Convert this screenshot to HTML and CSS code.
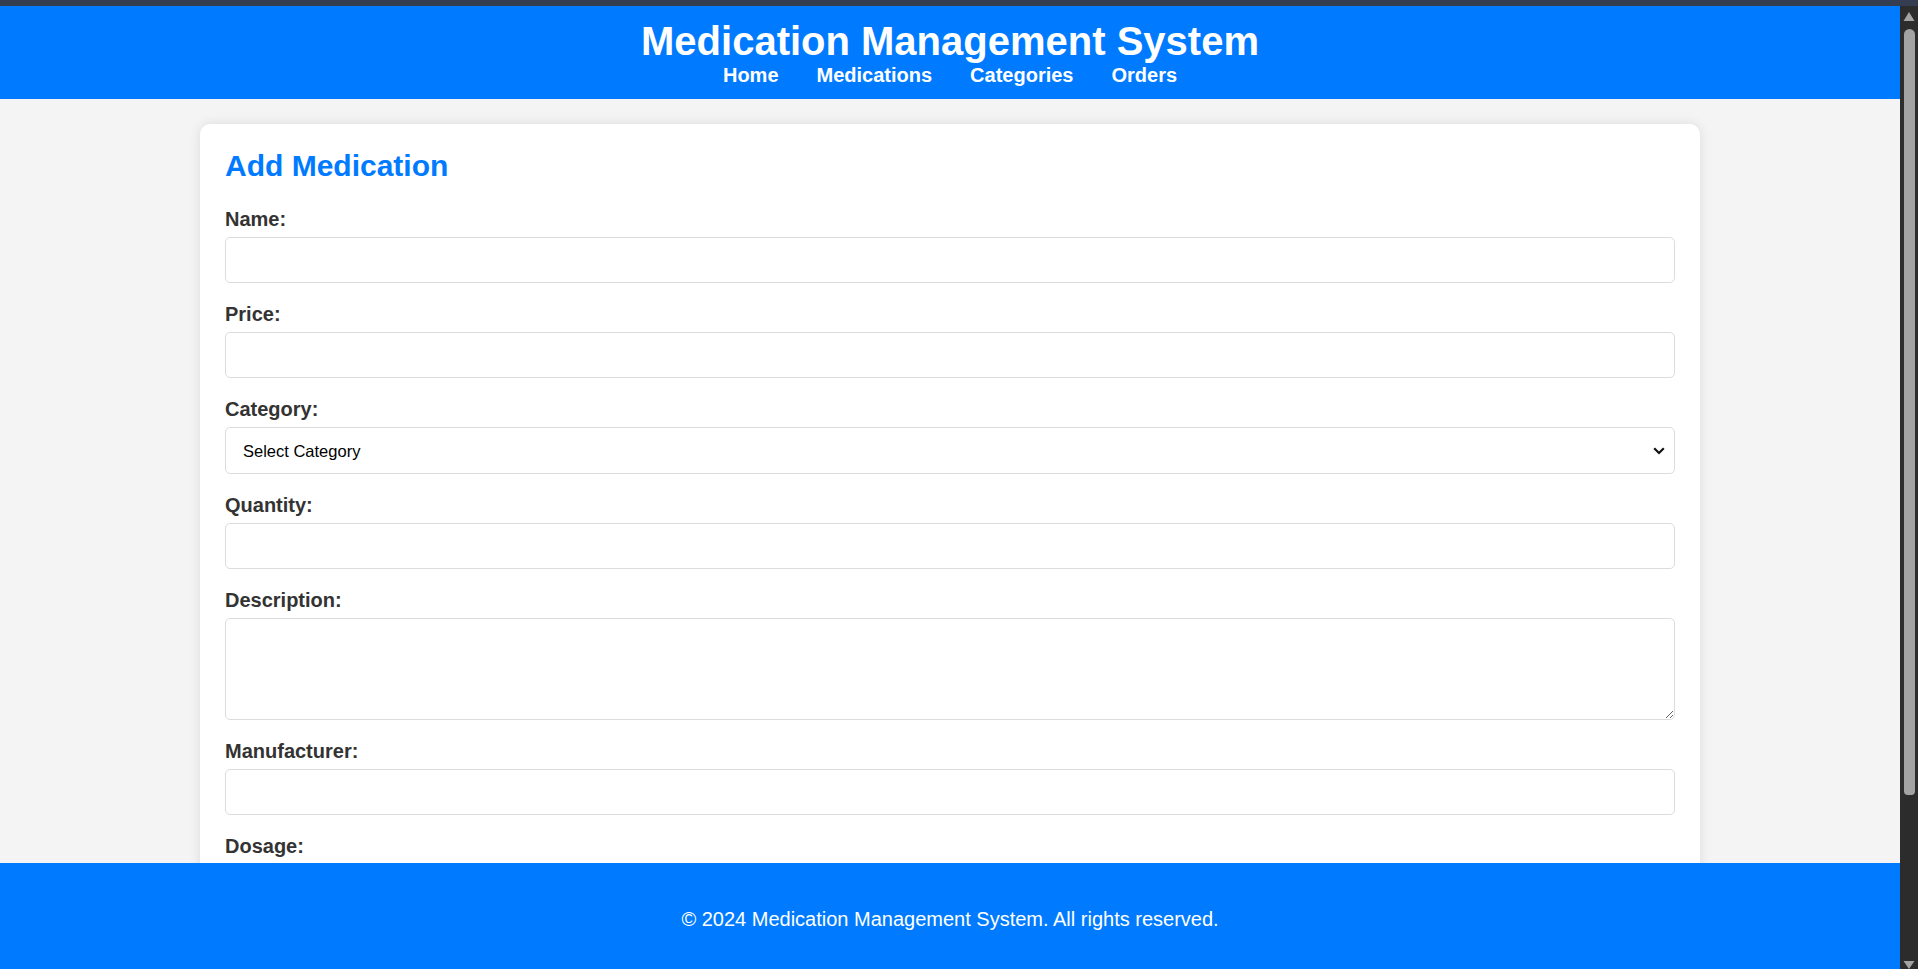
FILE: index.html
```html
<!DOCTYPE html>
<html lang="en">
<head>
<meta charset="utf-8">
<title>Add Medication</title>
<link rel="stylesheet" href="styles.css">
</head>
<body>
<div class="topstrip"></div>
<div class="frame">
  <div class="viewport">
    <header class="site-header">
      <h1 class="site-title">Medication Management System</h1>
      <nav class="site-nav">
        <a href="#">Home</a>
        <a href="#">Medications</a>
        <a href="#">Categories</a>
        <a href="#">Orders</a>
      </nav>
    </header>
    <main class="content">
      <section class="card">
        <h2 class="card-title">Add Medication</h2>
        <form class="form">
          <label class="field-label" for="name">Name:</label>
          <input class="field" id="name" type="text">
          <label class="field-label" for="price">Price:</label>
          <input class="field" id="price" type="text">
          <label class="field-label" for="category">Category:</label>
          <div class="select-wrap">
            <select class="field field-select" id="category">
              <option>Select Category</option>
            </select>
            <svg class="select-arrow" width="12" height="8" viewBox="0 0 12 8"><path d="M1.2 1.2 L6 6 L10.8 1.2" fill="none" stroke="#111" stroke-width="2.2"/></svg>
          </div>
          <label class="field-label" for="quantity">Quantity:</label>
          <input class="field" id="quantity" type="text">
          <label class="field-label" for="description">Description:</label>
          <textarea class="field field-area" id="description"></textarea>
          <label class="field-label" for="manufacturer">Manufacturer:</label>
          <input class="field" id="manufacturer" type="text">
          <label class="field-label" for="dosage">Dosage:</label>
          <input class="field" id="dosage" type="text">
        </form>
      </section>
    </main>
    <footer class="site-footer">
      <p>&copy; 2024 Medication Management System. All rights reserved.</p>
    </footer>
  </div>
  <div class="scrollbar">
    <svg class="sb-arrow" width="18" height="16" viewBox="0 0 18 16"><path d="M3.5 15 L9 6 L14.5 15 Z" fill="#a3a3a3"/></svg>
    <div class="sb-track"><div class="sb-thumb"></div></div>
    <svg class="sb-arrow" width="18" height="8" viewBox="0 0 18 8"><path d="M3.5 0 L9 8 L14.5 0 Z" fill="#a3a3a3"/></svg>
  </div>
</div>
</body>
</html>
```
FILE: styles.css
```css
html, body {
  margin: 0;
  padding: 0;
  height: 100%;
  overflow: hidden;
}
body {
  font-family: "Liberation Sans", Arial, sans-serif;
  background: #f4f4f4;
  color: #333;
  display: flex;
  flex-direction: column;
}
.topstrip {
  height: 6px;
  background: #343e50;
  flex: none;
}
.frame {
  flex: 1;
  display: flex;
  min-height: 0;
}
.viewport {
  flex: 1;
  display: flex;
  flex-direction: column;
  min-width: 0;
}
.site-header {
  background: #007bff;
  color: #fff;
  text-align: center;
  padding: 12px 0 12px;
  flex: none;
}
.site-title {
  margin: 0;
  font-size: 40px;
  line-height: 46px;
  font-weight: bold;
}
.site-nav {
  margin-top: 0;
  display: flex;
  justify-content: center;
  gap: 38px;
}
.site-nav a {
  color: #fff;
  text-decoration: none;
  font-weight: bold;
  font-size: 20px;
  line-height: 23px;
}
.content {
  flex: 1;
  min-height: 0;
  overflow: hidden;
  padding-top: 25px;
}
.card {
  width: 1500px;
  box-sizing: border-box;
  margin: 0 auto;
  background: #fff;
  border-radius: 10px;
  box-shadow: 0 0 12px rgba(0, 0, 0, 0.1);
  padding: 24px 25px 25px;
}
.card-title {
  margin: 0 0 23px;
  color: #007bff;
  font-size: 30px;
  line-height: 35px;
  font-weight: bold;
}
.form {
  display: flex;
  flex-direction: column;
}
.field-label {
  display: block;
  font-weight: bold;
  font-size: 20px;
  line-height: 23px;
  padding-top: 2px;
  margin-bottom: 6px;
  color: #333;
}
.field {
  display: block;
  box-sizing: border-box;
  width: 100%;
  height: 46px;
  margin: 0 0 18px;
  padding: 0 17px;
  border: 1px solid #dcdcdc;
  border-radius: 5px;
  background: #fff;
  font-family: "Liberation Sans", Arial, sans-serif;
  font-size: 16.5px;
  color: #000;
}
.select-wrap {
  position: relative;
}
.field-select {
  height: 47px;
  appearance: none;
  -webkit-appearance: none;
  outline: none;
}
.select-arrow {
  position: absolute;
  right: 10px;
  top: 20px;
}
.field-area {
  height: 102px;
  padding: 12px 17px;
  resize: vertical;
}
.site-footer {
  flex: none;
  height: 106px;
  box-sizing: border-box;
  background: #007bff;
  color: #fff;
  text-align: center;
  padding-top: 45px;
}
.site-footer p {
  margin: 0;
  font-size: 20px;
  line-height: 23px;
}
.scrollbar {
  width: 18px;
  flex: none;
  background: #2c2c2c;
  display: flex;
  flex-direction: column;
}
.sb-arrow {
  display: block;
  flex: none;
}
.sb-track {
  flex: 1;
  padding-top: 7px;
}
.sb-thumb {
  width: 11px;
  margin-left: 4px;
  height: 766px;
  background: #a3a3a3;
  border-radius: 6px 6px 4px 4px;
}
```
